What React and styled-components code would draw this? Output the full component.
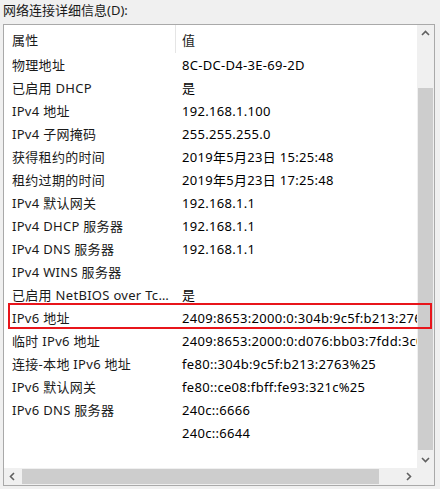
import React from "react";
import styled, { createGlobalStyle } from "styled-components";

const GlobalStyle = createGlobalStyle`
  html, body {
    margin: 0;
    padding: 0;
    background: #f0f0f0;
  }
  body {
    font-family: "Noto Sans", "Noto Sans CJK SC", sans-serif;
    font-size: 13px;
    letter-spacing: 0.3px;
    color: #1a1a1a;
  }
`;

const Page = styled.div`
  width: 440px;
  height: 489px;
  padding: 2px 0 0 3px;
  box-sizing: border-box;
  background: #f0f0f0;
`;

const Caption = styled.div`
  height: 22px;
  line-height: 17px;
  white-space: nowrap;
  letter-spacing: 0;
`;

const ListBox = styled.div`
  position: relative;
  width: 432px;
  height: 462px;
  box-sizing: border-box;
  border: 1px solid #a9a9a9;
  background: #fff;
  display: grid;
  grid-template-columns: 1fr 17px;
  grid-template-rows: 1fr 17px;
`;

const Viewport = styled.div`
  overflow: hidden;
  display: flex;
  flex-direction: column;
`;

const Header = styled.div`
  display: flex;
  height: 28px;
  flex-shrink: 0;
`;

const HeaderCell = styled.div`
  width: ${(p) => p.$w}px;
  flex-shrink: 0;
  box-sizing: border-box;
  padding: 1px 0 0 ${(p) => p.$pad}px;
  display: flex;
  align-items: center;
  border-right: ${(p) => (p.$sep ? "1px solid #e5e5e5" : "none")};
  white-space: nowrap;
`;

const Row = styled.div`
  display: flex;
  height: 23px;
  flex-shrink: 0;
  align-items: center;
`;

const Cell = styled.div`
  width: ${(p) => p.$w}px;
  flex-shrink: 0;
  box-sizing: border-box;
  padding-left: ${(p) => p.$pad}px;
  white-space: nowrap;
  overflow: hidden;
  text-overflow: ellipsis;
  color: ${(p) => (p.$value ? "#000" : "#1a1a1a")};
`;

const VBar = styled.div`
  grid-column: 2;
  grid-row: 1;
  background: #f0f0f0;
  display: flex;
  flex-direction: column;
`;

const HBar = styled.div`
  grid-column: 1;
  grid-row: 2;
  background: #f0f0f0;
  display: flex;
`;

const Corner = styled.div`
  grid-column: 2;
  grid-row: 2;
  background: #f0f0f0;
`;

const Arrow = styled.div`
  width: 17px;
  height: 17px;
  flex-shrink: 0;
  display: flex;
  align-items: center;
  justify-content: center;
`;

const Track = styled.div`
  flex: 1;
  display: flex;
  flex-direction: ${(p) => (p.$vertical ? "column" : "row")};
  padding: ${(p) => (p.$vertical ? "46px 0 1px 0" : "0 21px 0 1px")};
`;

const Thumb = styled.div`
  flex: 1;
  background: #cdcdcd;
  margin: ${(p) => (p.$vertical ? "0 1px" : "1px 0")};
`;

const Highlight = styled.div`
  position: absolute;
  left: 4px;
  top: 278px;
  width: 424px;
  height: 26px;
  box-sizing: border-box;
  border: 2px solid #e8151b;
  pointer-events: none;
`;

const Chevron = ({ dir }) => {
  const rot = { up: 0, down: 180, left: -90, right: 90 }[dir];
  return (
    <svg width="9" height="9" viewBox="0 0 9 9" style={{ transform: `rotate(${rot}deg)` }}>
      <path d="M1 6 L4.5 2.5 L8 6" fill="none" stroke="#606060" strokeWidth="1.6" />
    </svg>
  );
};

const items = [
  ["物理地址", "8C-DC-D4-3E-69-2D"],
  ["已启用 DHCP", "是"],
  ["IPv4 地址", "192.168.1.100"],
  ["IPv4 子网掩码", "255.255.255.0"],
  ["获得租约的时间", "2019年5月23日 15:25:48"],
  ["租约过期的时间", "2019年5月23日 17:25:48"],
  ["IPv4 默认网关", "192.168.1.1"],
  ["IPv4 DHCP 服务器", "192.168.1.1"],
  ["IPv4 DNS 服务器", "192.168.1.1"],
  ["IPv4 WINS 服务器", ""],
  ["已启用 NetBIOS over Tcpip", "是"],
  ["IPv6 地址", "2409:8653:2000:0:304b:9c5f:b213:2763"],
  ["临时 IPv6 地址", "2409:8653:2000:0:d076:bb03:7fdd:3c0e"],
  ["连接-本地 IPv6 地址", "fe80::304b:9c5f:b213:2763%25"],
  ["IPv6 默认网关", "fe80::ce08:fbff:fe93:321c%25"],
  ["IPv6 DNS 服务器", "240c::6666"],
  ["", "240c::6644"],
];

export default function App() {
  return (
    <>
      <GlobalStyle />
      <Page>
        <Caption>网络连接详细信息(D):</Caption>
        <ListBox>
          <Viewport>
            <Header>
              <HeaderCell $w={172} $pad={8} $sep>
                属性
              </HeaderCell>
              <HeaderCell $w={300} $pad={6}>
                值
              </HeaderCell>
            </Header>
            {items.map(([label, value], i) => (
              <Row key={i}>
                <Cell $w={171} $pad={8}>
                  {label}
                </Cell>
                <Cell $w={320} $pad={7} $value>
                  {value}
                </Cell>
              </Row>
            ))}
          </Viewport>
          <VBar>
            <Arrow>
              <Chevron dir="up" />
            </Arrow>
            <Track $vertical>
              <Thumb $vertical />
            </Track>
            <Arrow>
              <Chevron dir="down" />
            </Arrow>
          </VBar>
          <HBar>
            <Arrow>
              <Chevron dir="left" />
            </Arrow>
            <Track>
              <Thumb />
            </Track>
            <Arrow>
              <Chevron dir="right" />
            </Arrow>
          </HBar>
          <Corner />
          <Highlight />
        </ListBox>
      </Page>
    </>
  );
}
